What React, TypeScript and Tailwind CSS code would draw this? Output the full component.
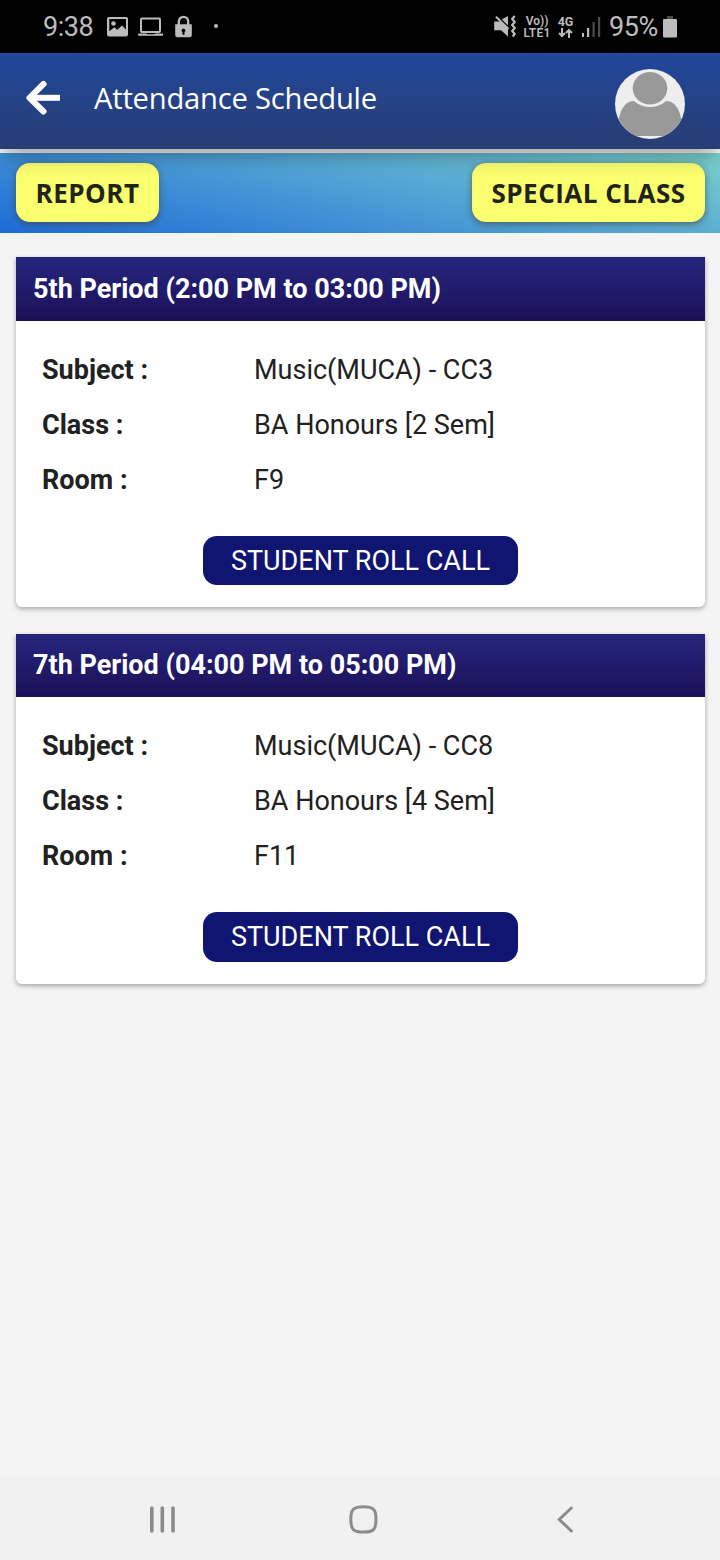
import React from "react";

type Period = { title: string; subject: string; className: string; room: string; header: string; bodyHeight: string; button: string };

const periods: Period[] = [
  { title: "5th Period (2:00 PM to 03:00 PM)", subject: "Music(MUCA) - CC3", className: "BA Honours [2 Sem]", room: "F9", header: "h-16 leading-[64px]", bodyHeight: "h-[286px]", button: "h-[49px]" },
  { title: "7th Period (04:00 PM to 05:00 PM)", subject: "Music(MUCA) - CC8", className: "BA Honours [4 Sem]", room: "F11", header: "h-[63px] leading-[63px]", bodyHeight: "h-[287px]", button: "h-[50px]" },
];

function StatusBar() {
  return (
    <div className="flex h-[53px] items-center justify-between bg-black pl-[43px] pr-[42px] text-[#bcbcbc]">
      <div className="flex items-center">
        <span className="w-[63px] whitespace-nowrap pt-[2px] text-[27px] leading-[53px] tracking-[-0.5px]">9:38</span>
        <svg className="h-[53px] w-[120px]" viewBox="106 0 120 53" fill="currentColor">
          <path fillRule="evenodd" d="M109 17h17q2 0 2 2v15.500q0 2-2 2h-17q-2 0-2-2V19q0-2 2-2Zm0.300 2v12.200l5-4 3 2.500 4.700-4.200 4 4V19ZM113.500 21.200a2.300 2.300 0 1 1 0 4.600a2.300 2.300 0 0 1 0-4.600Z" />
          <path fillRule="evenodd" d="M142 17.500h17q2 0 2 2V31q0 2-2 2h-17q-2 0-2-2V19.500q0-2 2-2Zm0 2V31h17V19.500Z" />
          <path d="M138.200 33.500h7.800l1.500.700h6.500l1.500-.700h7.500v2.300h-24.800Z" />
          <path fillRule="evenodd" d="M175.200 24.300h16.600v11q0 2-2 2h-12.600q-2 0-2-2Zm8.300 4.200a2 2 0 0 0-1 3.700v2.500h2v-2.500a2 2 0 0 0-1-3.700Z" />
          <path d="M178.800 25v-3.500a4.700 4.700 0 0 1 9.400 0V25" fill="none" stroke="currentColor" strokeWidth="2.300" />
          <circle cx="216" cy="26" r="2" />
        </svg>
      </div>
      <div className="flex items-center">
        <svg className="h-[53px] w-[28px]" viewBox="492 0 28 53" fill="currentColor">
          <path d="M494.200 21.500h5.800l8 7.800v7.200l-7-6.200h-6.800Z" />
          <path d="M501.800 19.500 508 16v9.500Z" />
          <path d="m496 16.800 12.500 12.200" stroke="currentColor" strokeWidth="2" fill="none" />
          <path d="m514.700 16-2.500 3 2.500 3-2.500 3 2.500 3-2.500 3 2.500 3-2 2.500" stroke="currentColor" strokeWidth="2.200" fill="none" />
        </svg>
        <div className="flex w-[34px] flex-col items-center text-[12px] font-semibold leading-[12px]">
          <span className="whitespace-nowrap">Vo))</span>
          <span className="whitespace-nowrap tracking-[0.200px]">LTE1</span>
        </div>
        <div className="mr-px flex w-[23px] flex-col items-center">
          <span className="text-[12.500px] font-bold leading-[13px]">4G</span>
          <svg className="h-[10px] w-[15px]" viewBox="0 0 15 10" fill="none" stroke="currentColor" strokeWidth="2">
            <path d="M4 0v8M1 5l3 3 3-3M11 10V2M8 5l3-3 3 3" />
          </svg>
        </div>
        <svg className="h-[53px] w-[31px]" viewBox="578 0 31 53" fill="currentColor">
          <path d="M582 33h2v4h-2zM587 28h2.200v9H587z" />
          <path d="M592.500 22h2.200v15h-2.200zM598 17h2.200v20H598z" opacity=".4" />
        </svg>
        <span className="w-[53px] whitespace-nowrap pt-[2px] text-[27px] leading-[53px] tracking-[-0.400px]">95%</span>
        <svg className="h-[53px] w-[16px]" viewBox="662 0 16 53" fill="currentColor">
          <path d="M667 16h6v4h-6z" opacity=".4" />
          <path d="M664 19h12q1 0 1 1v16.500q0 1-1 1h-12q-1 0-1-1V20q0-1 1-1Z" />
        </svg>
      </div>
    </div>
  );
}

function Header() {
  return (
    <header className="relative z-10 flex h-24 items-start bg-linear-to-b from-[#21469c] to-[#283e73] pl-[25px] pr-[35px] shadow-[0_12px_18px_-5px_rgba(0,0,0,0.32)]">
      <svg className="mt-[26px] h-[38px] w-[37px]" viewBox="25 79 37 38" fill="none" stroke="white" strokeWidth="6" strokeLinejoin="round">
        <path d="M43.500 84 29.500 97.800 43.500 111.500" strokeLinecap="round" />
        <path d="M30 97.800h30" />
      </svg>
      <h1 className="ml-[32px] whitespace-nowrap font-['Open_Sans'] text-[29.200px] leading-[90px] tracking-[-0.230px] text-white">Attendance Schedule</h1>
      <svg className="ml-auto mt-4 size-[70px]" viewBox="0 0 70 70">
        <defs>
          <clipPath id="avatar"><circle cx="35" cy="35" r="35" /></clipPath>
        </defs>
        <g clipPath="url(#avatar)">
          <rect width="70" height="70" fill="#eee" />
          <path d="M4 67V49C6 39 11 32 19 32c9 8 23 8 32 0 8 0 13 7 15 17v18Z" fill="#999" />
          <ellipse cx="35" cy="19.200" rx="18.700" ry="17.700" fill="#eee" />
          <ellipse cx="35" cy="19.200" rx="17.300" ry="16.300" fill="#999" />
        </g>
      </svg>
    </header>
  );
}

function Detail({ label, value }: { label: string; value: string }) {
  return (
    <div className="flex h-[55px] items-center">
      <span className="w-[212px] font-bold">{label} :</span>
      <span>{value}</span>
    </div>
  );
}

function PeriodCard({ period }: { period: Period }) {
  return (
    <section className="overflow-hidden rounded-b-[6px] bg-white text-[27px] text-[#212121] shadow-[0_2px_5px_rgba(0,0,0,0.32)]">
      <h2 className={`${period.header} bg-linear-to-b from-[#26267f] to-[#1b1058] pl-[17px] text-[27px] font-bold text-white`}>{period.title}</h2>
      <div className={`${period.bodyHeight} flex flex-col pl-[26px] pt-[22px]`}>
        <Detail label="Subject" value={period.subject} />
        <Detail label="Class" value={period.className} />
        <Detail label="Room" value={period.room} />
        <button className={`${period.button} ml-[161px] mt-[28px] w-[315px] whitespace-nowrap rounded-[14px] bg-[#111572] text-[27px] leading-[48px] text-white`}>STUDENT ROLL CALL</button>
      </div>
    </section>
  );
}

export default function App() {
  return (
    <div className="flex h-[1560px] w-[720px] flex-col overflow-hidden bg-[#f4f4f4] font-[Roboto,sans-serif]">
      <StatusBar />
      <Header />
      <div className="mt-1 flex h-20 items-start justify-between bg-[linear-gradient(12deg,#1d6bd7,#4c9ed5_50%,#7bd1cd)] pl-4 pr-[15px] pt-[10px] font-['Open_Sans'] text-[26px] font-bold leading-[60px] tracking-[0.500px] text-[#212318]">
        <button className="h-[59px] w-[143px] whitespace-nowrap rounded-[14px] bg-[#faff70] shadow-[0_2px_7px_rgba(70,50,30,0.6)]">REPORT</button>
        <button className="h-[59px] w-[233px] whitespace-nowrap rounded-[14px] bg-[#faff70] shadow-[0_2px_7px_rgba(70,50,30,0.6)]">SPECIAL CLASS</button>
      </div>
      <main className="flex flex-1 flex-col gap-[27px] pl-4 pr-[15px] pt-6">
        {periods.map((period) => <PeriodCard key={period.title} period={period} />)}
      </main>
      <nav className="h-[84px] bg-[#f1f1f1]">
        <svg className="h-[84px] w-[720px]" viewBox="0 1476 720 84" fill="none" stroke="#8c8c8c" strokeWidth="3.600" strokeLinecap="round">
          <path d="M151.800 1508v23M162.300 1508v23M173 1508v23" />
          <path d="M363.500 1506.800c10 0 12.500 2.500 12.500 12.700s-2.500 12.500-12.500 12.500-12.700-2.300-12.700-12.500 2.500-12.700 12.700-12.700Z" strokeWidth="3" />
          <path d="m571.300 1508-12 11.500 12 11.500" strokeWidth="3" />
        </svg>
      </nav>
    </div>
  );
}
